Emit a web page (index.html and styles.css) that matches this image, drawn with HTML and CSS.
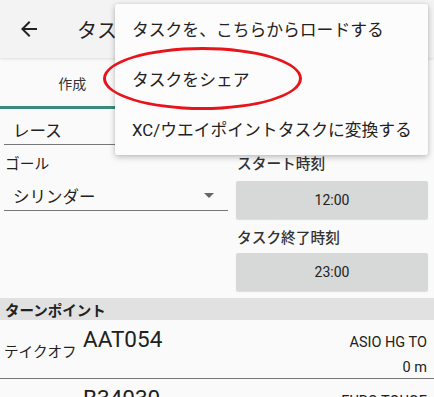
FILE: index.html
```html
<!DOCTYPE html>
<html lang="ja">
<head>
<meta charset="utf-8">
<link rel="stylesheet" href="styles.css">
</head>
<body>
<div class="screen">
  <header class="appbar">
    <svg class="back" width="24" height="24" viewBox="0 0 24 24"><path d="M20 11H7.83l5.59-5.59L12 4l-8 8 8 8 1.41-1.41L7.83 13H20v-2z" fill="#222"/></svg>
    <div class="title">タスク編集</div>
  </header>
  <nav class="tabs">
    <div class="tab active">作成</div>
    <div class="tab">地図</div>
    <div class="tab">詳細</div>
  </nav>
  <main class="content">
    <div class="field full"><span>レース</span></div>
    <div class="cols">
      <div class="col left">
        <div class="label">ゴール</div>
        <div class="field spinner"><span>シリンダー</span><span class="arrow"></span></div>
      </div>
      <div class="col right">
        <div class="label">スタート時刻</div>
        <div class="btn first">12:00</div>
        <div class="label">タスク終了時刻</div>
        <div class="btn second">23:00</div>
      </div>
    </div>
    <div class="section">ターンポイント</div>
    <div class="tp">
      <div class="tp-left">
        <span class="tp-type">テイクオフ</span>
        <span class="tp-name">AAT054</span>
      </div>
      <div class="tp-right">
        <span>ASIO HG TO</span>
        <span>0 m</span>
      </div>
    </div>
    <div class="tp">
      <div class="tp-left">
        <span class="tp-type"></span>
        <span class="tp-name">B34030</span>
      </div>
      <div class="tp-right">
        <span>EURO TOUGE</span>
      </div>
    </div>
    <div class="scrollbar"></div>
  </main>
  <div class="menu">
    <div class="item">タスクを、こちらからロードする</div>
    <div class="item">タスクをシェア</div>
    <div class="item">XC/ウエイポイントタスクに変換する</div>
  </div>
  <div class="ring"></div>
</div>
</body>
</html>
```

FILE: styles.css
```css
* { box-sizing: border-box; }
html, body { margin: 0; padding: 0; }
body {
  background: #fafafa;
  font-family: Roboto, "Noto Sans CJK JP", sans-serif;
  color: #212121;
  width: 434px;
  height: 397px;
  overflow: hidden;
}
.screen { position: relative; width: 434px; height: 397px; overflow: hidden; }
.appbar {
  height: 58px;
  background: #f3f3f3;
  display: flex;
  align-items: center;
  padding-left: 17px;
  gap: 36px;
  box-shadow: 0 1px 3px rgba(0,0,0,0.12);
  position: relative;
  z-index: 1;
}
.title { font-size: 20px; color: #222; }
.tabs { display: flex; height: 51px; }
.tab {
  flex: 1;
  display: flex;
  align-items: center;
  justify-content: center;
  font-size: 14px;
  color: #333;
  padding-top: 2px;
}
.tab.active { border-bottom: 3px solid #3a8a7a; }
.content { padding: 0 6px 0 4px; position: relative; }
.field {
  display: flex;
  align-items: center;
  border-bottom: 1.5px solid #777;
  font-size: 16.5px;
  padding-left: 9px;
}
.field.full { height: 36px; padding-top: 6px; }
.cols { display: flex; gap: 8px; }
.col { display: flex; flex-direction: column; }
.col.left { width: 224px; }
.col.right { flex: 1; }
.label { font-size: 14.7px; height: 28px; display: flex; align-items: flex-end; padding-left: 1px; }
.right .label { font-weight: 500; color: #333; }
.spinner { height: 35px; justify-content: space-between; padding-right: 14px; margin-top: 3px; padding-top: 6px; }
.arrow {
  width: 0; height: 0;
  border-left: 5px solid transparent;
  border-right: 5px solid transparent;
  border-top: 5px solid #666;
  margin-top: -2px;
}
.btn {
  height: 38px;
  background: #d7d8d8;
  border-radius: 2px;
  box-shadow: 0 1px 1px rgba(0,0,0,0.12);
  display: flex;
  align-items: center;
  justify-content: center;
  font-size: 14px;
  color: #222;
}
.btn.first { margin-top: 8px; }
.btn.second { margin-top: 6px; }
.section {
  margin: 7px -6px 0 -4px;
  height: 22px;
  background: #e1e1e1;
  font-size: 14.5px;
  font-weight: 700;
  padding-left: 5px;
  display: flex;
  align-items: center;
  color: #222;
}
.tp {
  display: flex;
  justify-content: space-between;
  height: 59px;
  border-bottom: 1.5px solid #777;
  margin: 0 -6px 0 -4px;
  padding: 0 7px 0 4px;
}
.tp-left { display: flex; align-items: flex-start; gap: 6px; }
.tp-type { font-size: 14.6px; padding-top: 20px; width: 73px; white-space: nowrap; }
.tp-name { font-size: 22.5px; padding-top: 6px; }
.tp-right { display: flex; flex-direction: column; align-items: flex-end; font-size: 14.5px; padding-top: 14px; gap: 8px; }
.scrollbar { position: absolute; right: 6px; top: 350px; width: 4px; height: 60px; background: #ddd; border-radius: 2px; }
.menu {
  position: absolute;
  left: 115px;
  top: 4px;
  width: 313px;
  height: 151px;
  background: #fcfcfc;
  border-radius: 2px;
  box-shadow: 0 2px 6px rgba(0,0,0,0.25), 0 0 2px rgba(0,0,0,0.1);
  display: flex;
  flex-direction: column;
  z-index: 5;
}
.item { height: 50px; display: flex; align-items: center; padding-left: 17px; font-size: 16.8px; color: #222; }
.ring {
  position: absolute;
  left: 103px;
  top: 47px;
  width: 199px;
  height: 63px;
  border: 3px solid #e8141c;
  border-radius: 50%;
  z-index: 6;
}
```
